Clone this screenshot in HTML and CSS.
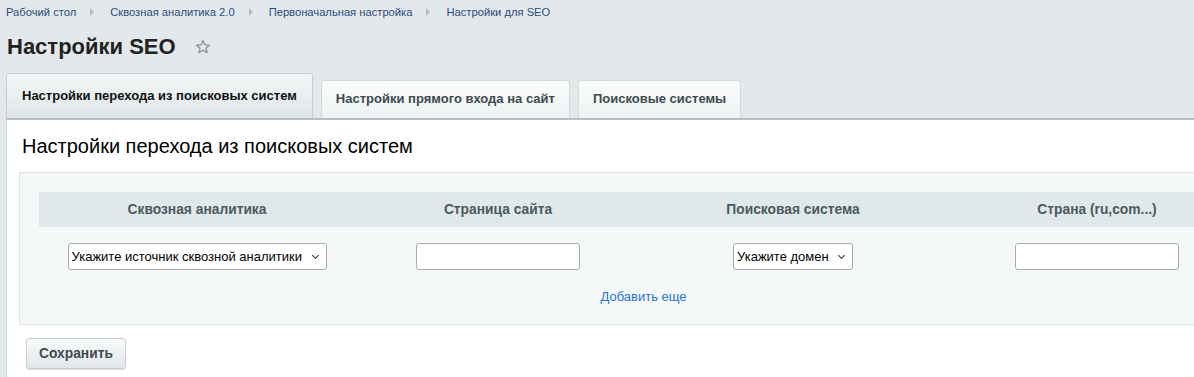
FILE: index.html
```html
<!DOCTYPE html>
<html lang="ru">
<head>
    <meta charset="UTF-8">
    <title>Настройки SEO</title>
    <link rel="stylesheet" href="styles.css">
</head>
<body>
    <div class="breadcrumbs">
        <a href="#">Рабочий стол</a>
        <span class="sep"></span>
        <a href="#">Сквозная аналитика 2.0</a>
        <span class="sep"></span>
        <a href="#">Первоначальная настройка</a>
        <span class="sep"></span>
        <a href="#">Настройки для SEO</a>
    </div>

    <div class="title-row">
        <h1>Настройки SEO</h1>
        <svg class="star" width="16" height="16" viewBox="0 0 16 16">
            <path d="M8 1.5l1.9 4.2 4.6.4-3.5 3 1.1 4.5L8 11.2l-4.1 2.4 1.1-4.5-3.5-3 4.6-.4z" fill="none" stroke="#8f9a9e" stroke-width="1.4" stroke-linejoin="round"/>
        </svg>
    </div>

    <div class="tabs">
        <div class="tab active">Настройки перехода из поисковых систем</div>
        <div class="tab">Настройки прямого входа на сайт</div>
        <div class="tab">Поисковые системы</div>
    </div>

    <div class="panel">
        <h2>Настройки перехода из поисковых систем</h2>

        <div class="box">
            <table>
                <thead>
                    <tr>
                        <th class="c1">Сквозная аналитика</th>
                        <th class="c2">Страница сайта</th>
                        <th class="c3">Поисковая система</th>
                        <th class="c4">Страна (ru,com...)</th>
                    </tr>
                </thead>
                <tbody>
                    <tr>
                        <td>
                            <span class="sel-wrap">
                                <select class="sel">
                                    <option>Укажите источник сквозной аналитики</option>
                                </select>
                            </span>
                        </td>
                        <td><input type="text" class="inp"></td>
                        <td>
                            <span class="sel-wrap">
                                <select class="sel">
                                    <option>Укажите домен</option>
                                </select>
                            </span>
                        </td>
                        <td><input type="text" class="inp"></td>
                    </tr>
                </tbody>
            </table>
            <div class="more"><a href="#">Добавить еще</a></div>
        </div>

        <div class="actions">
            <button class="btn">Сохранить</button>
        </div>
    </div>
</body>
</html>
```

FILE: styles.css
```css
body {
    margin: 0;
    padding: 0;
    font-family: "Liberation Sans", Arial, sans-serif;
    background-color: #e3e9eb;
    overflow: hidden;
}

.breadcrumbs {
    display: flex;
    align-items: center;
    height: 23px;
    padding: 0 6px;
    font-size: 11.2px;
}

.breadcrumbs a {
    color: #2b4b7e;
    text-decoration: none;
}

.sep {
    width: 0;
    height: 0;
    margin: 0 16px 0 14px;
    border-left: 4px solid #b4bcbf;
    border-top: 4px solid transparent;
    border-bottom: 4px solid transparent;
}

.title-row {
    display: flex;
    align-items: center;
    height: 47px;
    padding-left: 7px;
}

h1 {
    margin: 0;
    font-size: 22px;
    font-weight: bold;
    color: #222;
}

.star {
    margin-left: 19px;
}

.tabs {
    display: flex;
    align-items: flex-end;
    padding-left: 6px;
    height: 48px;
}

.tab {
    box-sizing: border-box;
    height: 38px;
    line-height: 36px;
    padding: 0 14px;
    margin-right: 8px;
    font-size: 13px;
    font-weight: bold;
    color: #3d4a4e;
    background: linear-gradient(#fbfcfc, #eef2f3);
    border: 1px solid #d3dadc;
    border-bottom: none;
    border-radius: 3px 3px 0 0;
}

.tab.active {
    height: 45px;
    line-height: 44px;
    padding: 0 15px;
    color: #111;
    background: linear-gradient(#f3f6f7, #dfe6e8);
    border-color: #c6ced1;
}

.panel {
    margin-left: 6px;
    background: #fff;
    border-top: 2px solid #b6bfc2;
    border-left: 1px solid #cfd7da;
    padding: 14px 0 20px 12px;
    width: 1300px;
}

h2 {
    margin: 0 0 14px 3px;
    font-size: 20px;
    font-weight: normal;
    line-height: 24px;
    color: #000;
}

.box {
    box-sizing: border-box;
    width: 1250px;
    background: #f5f8f9;
    border: 1px solid #dce4e7;
    padding: 19px 20px 0 19px;
    height: 153px;
}

table {
    border-collapse: collapse;
    width: 1210px;
}

th {
    height: 35px;
    background: #e0e8ea;
    font-size: 13.8px;
    font-weight: bold;
    color: #4b5a5f;
    text-align: center;
    padding: 0;
}

.c1 { width: 316px; }
.c2 { width: 286px; }
.c3 { width: 304px; }
.c4 { width: 304px; }

td {
    text-align: center;
    padding: 16px 0 0;
}

.sel-wrap {
    position: relative;
    display: inline-block;
}

.sel-wrap::after {
    content: "";
    position: absolute;
    right: 9px;
    top: 10px;
    width: 4px;
    height: 4px;
    border-right: 1.3px solid #333;
    border-bottom: 1.3px solid #333;
    transform: rotate(45deg);
    pointer-events: none;
}

.sel {
    -webkit-appearance: none;
    appearance: none;
    height: 27px;
    font-family: "Liberation Sans", Arial, sans-serif;
    font-size: 13px;
    color: #000;
    background: #fff;
    border: 1px solid #a5abb0;
    border-radius: 3px;
    padding: 0 23px 0 3px;
}

.inp {
    box-sizing: border-box;
    width: 164px;
    height: 27px;
    border: 1px solid #a5abb0;
    border-radius: 3px;
    background: #fff;
}

.more {
    text-align: center;
    padding-top: 19px;
    font-size: 13px;
}

.more a {
    color: #2675d7;
    text-decoration: none;
}

.actions {
    padding: 13px 0 0 7px;
}

.btn {
    height: 31px;
    padding: 0 12px;
    font-family: "Liberation Sans", Arial, sans-serif;
    font-size: 13.8px;
    font-weight: bold;
    color: #3d4a4e;
    background: linear-gradient(#f8fafa, #e0e7e9);
    border: 1px solid #c8d0d3;
    border-radius: 3px;
    box-shadow: 0 1px 1px rgba(0, 0, 0, 0.15);
}
```
